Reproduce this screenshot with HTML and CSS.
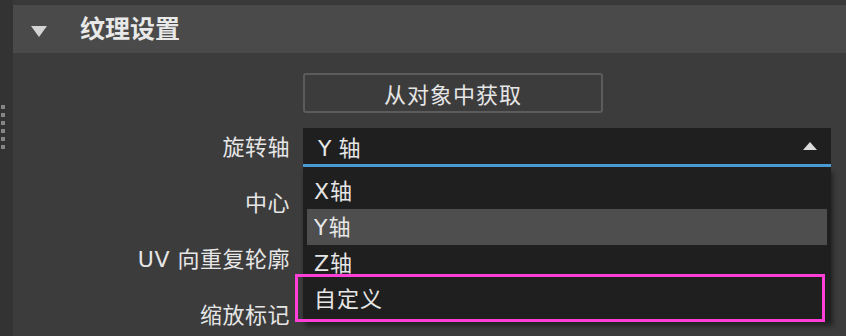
FILE: index.html
```html
<!DOCTYPE html>
<html lang="zh-CN">
<head>
    <meta charset="UTF-8">
    <meta name="viewport" content="width=device-width, initial-scale=1.0">
    <title>纹理设置</title>
    <link rel="stylesheet" href="styles.css">
</head>
<body>
    <div class="sidebar">
        <div class="grip">
            <span></span><span></span><span></span>
            <span></span><span></span><span></span>
        </div>
    </div>

    <div class="panel">
        <div class="header">
            <div class="arrow-down"></div>
            <h1>纹理设置</h1>
        </div>

        <div class="content">
            <div class="row">
                <div class="label"></div>
                <div class="control">
                    <button class="btn">从对象中获取</button>
                </div>
            </div>

            <div class="row">
                <div class="label">旋转轴</div>
                <div class="control">
                    <div class="select">
                        <span>Y 轴</span>
                        <div class="arrow-up"></div>
                    </div>
                </div>
            </div>

            <div class="row row-low">
                <div class="label">中心</div>
                <div class="control"></div>
            </div>

            <div class="row row-low">
                <div class="label">UV 向重复轮廓</div>
                <div class="control"></div>
            </div>

            <div class="row row-low">
                <div class="label">缩放标记</div>
                <div class="control"></div>
            </div>
        </div>
    </div>

    <!-- open dropdown list of 旋转轴 -->
    <ul class="options">
        <li>X轴</li>
        <li class="active">Y轴</li>
        <li>Z轴</li>
        <li>自定义</li>
    </ul>

    <div class="highlight-box"></div>
</body>
</html>
```

FILE: styles.css
```css
body {
    margin: 0;
    width: 846px;
    height: 336px;
    display: flex;
    background-color: #3c3c3c;
    font-family: "DejaVu Sans", "Noto Sans CJK SC", sans-serif;
    color: #e6e6e6;
    overflow: hidden;
    position: relative;
}

.sidebar {
    width: 13px;
    background-color: #333333;
    flex-shrink: 0;
}

.grip {
    display: flex;
    flex-direction: column;
    gap: 4px;
    padding: 105px 0 0 1px;
}

.grip span {
    width: 4px;
    height: 4px;
    background-color: #858585;
}

.panel {
    flex: 1;
    display: flex;
    flex-direction: column;
    border-top: 5px solid #393939;
}

.header {
    height: 48px;
    background-color: #4a4a4a;
    display: flex;
    align-items: center;
    padding-left: 18px;
}

.arrow-down {
    width: 0;
    height: 0;
    border-left: 8px solid transparent;
    border-right: 8px solid transparent;
    border-top: 11px solid #d4d4d4;
    margin-top: 4px;
}

.header h1 {
    margin: 0 0 0 33px;
    font-size: 25px;
    font-weight: bold;
    line-height: 1;
    color: #e8e8e8;
}

.content {
    display: flex;
    flex-direction: column;
    gap: 14px;
    padding-top: 20px;
}

.row {
    display: grid;
    grid-template-columns: 277px 528px;
    column-gap: 13px;
    height: 40px;
    align-items: center;
}

.row-low {
    margin-top: 2px;
}

.label {
    text-align: right;
    font-size: 22px;
    letter-spacing: 0.5px;
    line-height: 1;
    white-space: nowrap;
    padding-top: 2px;
}

.btn {
    width: 300px;
    height: 40px;
    background-color: #3c3c3c;
    border: 2px solid #5c5c5c;
    border-radius: 3px;
    color: #e6e6e6;
    font-family: inherit;
    font-size: 22px;
    letter-spacing: 1px;
    padding: 0;
}

.select {
    height: 36px;
    background-color: #1f1f1f;
    border-bottom: 3px solid #4a9ad4;
    box-shadow: 0 1px 0 #2a4356;
    display: flex;
    align-items: center;
    justify-content: space-between;
    padding: 0 14px 0 15px;
    font-size: 22px;
}

.arrow-up {
    width: 0;
    height: 0;
    border-left: 7px solid transparent;
    border-right: 7px solid transparent;
    border-bottom: 8px solid #dcdcdc;
}

.options {
    position: absolute;
    left: 303px;
    top: 167px;
    width: 528px;
    margin: 0;
    padding: 6px 0 4px;
    list-style: none;
    background-color: #1f1f1f;
    box-shadow: 2px 5px 5px rgba(0, 0, 0, 0.45);
}

.options li {
    height: 36px;
    line-height: 38px;
    padding-left: 11px;
    font-size: 22px;
    letter-spacing: 1px;
}

.options li.active {
    margin: 0 4px;
    padding-left: 7px;
    background-color: #4e4e4e;
}

.highlight-box {
    position: absolute;
    left: 295px;
    top: 274px;
    width: 524px;
    height: 42px;
    border: 3px solid #ff3fd6;
}
```
